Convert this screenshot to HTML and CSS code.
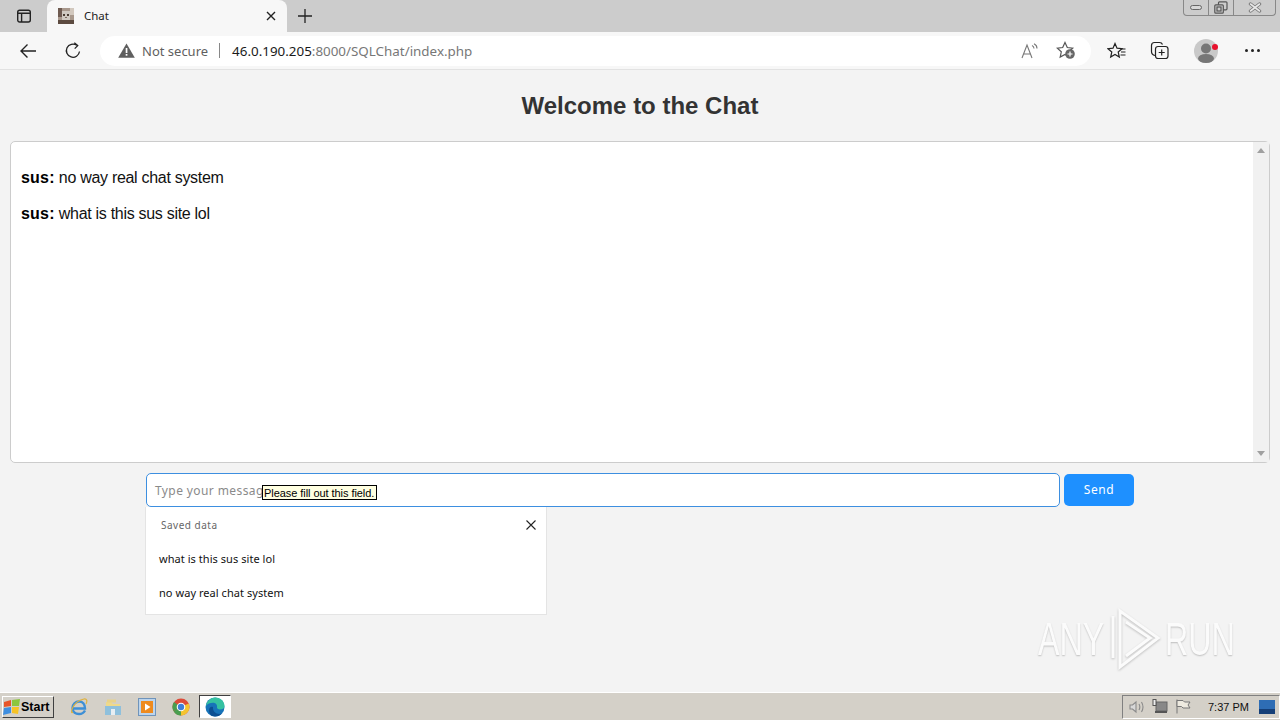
FILE: index.html
```html
<!DOCTYPE html>
<html lang="en">
<head>
    <meta charset="UTF-8">
    <title>Chat</title>
    <link rel="stylesheet" href="styles.css">
</head>
<body>
    <!-- Tab strip -->
    <div class="tabstrip">
        <div class="tab-actions">
            <svg class="icon" width="16" height="16" viewBox="0 0 16 16" fill="none" stroke="#222" stroke-width="1.4"><rect x="1.7" y="2.2" width="12.6" height="11.8" rx="2"/><path d="M2 5.2h12M5.6 5.2V14"/></svg>
        </div>
        <div class="tab">
            <svg class="favicon" width="16" height="16" viewBox="0 0 16 16"><rect width="16" height="16" fill="#a8988c"/><rect x="0" y="0" width="4" height="9" fill="#6e5a50"/><rect x="12" y="0" width="4" height="7" fill="#d2c8be"/><rect x="4" y="3" width="8" height="9" fill="#cfc8c0"/><rect x="5" y="6" width="2" height="2" fill="#4a3d33"/><rect x="9" y="6" width="2" height="2" fill="#4a3d33"/><rect x="7" y="9" width="2" height="1" fill="#7a685c"/><rect x="0" y="12" width="16" height="4" fill="#5c4a40"/></svg>
            <span class="tab-title">Chat</span>
            <svg class="tab-close" width="10" height="10" viewBox="0 0 10 10" stroke="#222" stroke-width="1.4"><path d="M1 1l8 8M9 1l-8 8"/></svg>
        </div>
        <svg class="new-tab" width="16" height="16" viewBox="0 0 16 16" stroke="#222" stroke-width="1.3"><path d="M8 1v14M1 8h14"/></svg>
        <div class="window-buttons">
            <div class="win-btn"><svg width="12" height="6" viewBox="0 0 12 6" fill="#d8d8d8" stroke="#666"><rect x="0.5" y="0.5" width="11" height="4" rx="2"/></svg></div>
            <div class="win-btn"><svg width="14" height="13" viewBox="0 0 14 13" fill="none" stroke="#555" stroke-width="1.2"><rect x="4.5" y="0.8" width="8.5" height="8" rx="1"/><rect x="0.8" y="3.8" width="8.5" height="8.4" rx="1" fill="#ccc"/><rect x="3" y="6" width="4" height="4"/></svg></div>
            <div class="win-btn win-close"><svg width="14" height="11" viewBox="0 0 14 11" stroke-linecap="round"><path d="M2.5 2l9 7M11.5 2l-9 7" stroke="#777" stroke-width="3.4"/><path d="M2.5 2l9 7M11.5 2l-9 7" stroke="#e8e8e8" stroke-width="1.6"/></svg></div>
        </div>
    </div>

    <!-- Address bar -->
    <div class="toolbar">
        <svg class="nav-back" width="18" height="16" viewBox="0 0 18 16" fill="none" stroke="#222" stroke-width="1.4"><path d="M17 8H2M8.5 1.5L2 8l6.5 6.5"/></svg>
        <svg class="nav-reload" width="18" height="18" viewBox="0 0 18 18" fill="none" stroke="#222" stroke-width="1.3"><path d="M15.5 9.5A6.6 6.6 0 1 1 12.8 3.3"/><path d="M10.3 0.8l3.4 2.8-3 3"/></svg>
        <div class="addressbar">
            <svg class="warn" width="17" height="15" viewBox="0 0 17 15"><path d="M8.5 0.5L16.8 14.800H0.2z" fill="#5f5f5f"/><rect x="7.7" y="5" width="1.7" height="5" fill="#fff"/><rect x="7.7" y="11" width="1.7" height="1.7" fill="#fff"/></svg>
            <span class="not-secure">Not secure</span>
            <span class="addr-sep"></span>
            <span class="url"><span class="url-host">46.0.190.205</span>:8000/SQLChat/index.php</span>
            <svg class="read-aloud" width="18" height="16" viewBox="0 0 18 16" fill="none" stroke="#777" stroke-width="1.1"><path d="M1 15L6 2l5 13M2.8 11h6.4"/><path d="M11 2.5c1.4.6 2 1.700 2 3M13 .8c1.900.9 3 2.600 3 4.700"/></svg>
            <svg class="fav-add" width="20" height="19" viewBox="0 0 20 19"><path d="M9 1.500l2.300 5 5.400.6-4 3.700 1.100 5.300L9 13.400l-4.800 2.700 1.100-5.300-4-3.700 5.400-.6z" fill="none" stroke="#555" stroke-width="1.2"/><circle cx="14" cy="13" r="4.8" fill="#666"/><path d="M14 10.500v5M11.500 13h5" stroke="#fff" stroke-width="1.2"/></svg>
        </div>
        <svg class="tool-icon" width="20" height="18" viewBox="0 0 20 18" fill="none" stroke="#222" stroke-width="1.2"><path d="M8 1.500l2 4.700 5 .5-3.800 3.300 1.100 5-4.300-2.600-4.300 2.600 1.100-5L1 6.700l5-.5z"/><path d="M13.500 7h5M14 10h4.500M13.500 13h5"/></svg>
        <svg class="tool-icon" width="20" height="19" viewBox="0 0 20 19" fill="none" stroke="#222" stroke-width="1.2"><path d="M5 14.500C2.800 14 1.500 12.500 1.500 10.500V4.500C1.500 2.800 2.800 1.500 4.500 1.500H9.500C11 1.500 12 2.200 12.500 3.500"/><rect x="5.5" y="5.5" width="12.5" height="12" rx="2.5"/><path d="M11.700 8.500v6M8.700 11.500h6"/></svg>
        <div class="avatar">
            <svg width="24" height="24" viewBox="0 0 24 24"><circle cx="12" cy="12" r="12" fill="#c9c9c9"/><circle cx="12" cy="9.5" r="5" fill="#777"/><ellipse cx="12" cy="19.5" rx="8" ry="4.5" fill="#777"/><circle cx="21" cy="8" r="3" fill="#e8112d"/></svg>
        </div>
        <div class="more-dots"><span></span><span></span><span></span></div>
    </div>

    <!-- Page -->
    <main class="page">
        <h1 class="page-title">Welcome to the Chat</h1>
        <div class="chat-box">
            <div class="messages">
                <p class="message"><strong>sus:</strong> no way real chat system</p>
                <p class="message"><strong>sus:</strong> what is this sus site lol</p>
            </div>
            <div class="scrollbar">
                <span class="arrow-up"></span>
                <span class="arrow-down"></span>
            </div>
        </div>
        <form class="chat-form">
            <div class="input-wrap">
                <div class="chat-input">Type your message</div>
                <div class="tooltip">Please fill out this field.</div>
                <div class="autofill">
                    <div class="autofill-head">
                        <span>Saved data</span>
                        <svg width="10" height="10" viewBox="0 0 10 10" stroke="#222" stroke-width="1.1"><path d="M0.5 0.5l9 9M9.5 0.5l-9 9"/></svg>
                    </div>
                    <div class="autofill-item">what is this sus site lol</div>
                    <div class="autofill-item">no way real chat system</div>
                </div>
            </div>
            <div class="send-btn">Send</div>
        </form>
        <div class="watermark">
            <span class="wm-text">ANY</span>
            <svg width="56" height="62" viewBox="0 0 56 62" fill="none" stroke="#fbfbfb" stroke-width="3" class="wm-logo"><path d="M7 8v42M14 3l38 27-38 29z"/><path d="M20 14l24 16-24 18"/></svg>
            <span class="wm-text">RUN</span>
        </div>
    </main>

    <!-- Taskbar -->
    <footer class="taskbar">
        <div class="start-btn">
            <svg width="18" height="16" viewBox="0 0 18 16"><path d="M1 3l7-2v6l-7 1z" fill="#e8562a"/><path d="M9 1l8-1-1 7-7 0z" fill="#8cc63f"/><path d="M1 9l7-1v6l-8 2z" fill="#3f8fe0"/><path d="M9 8h7l-1 7-6-1z" fill="#f7c325"/></svg>
            <span>Start</span>
        </div>
        <div class="quick-launch">
            <svg class="task-icon" width="18" height="18" viewBox="0 0 18 18" fill="none"><path d="M3 10.500h12C15 6 12.500 3.500 9 3.500S2.500 6.500 2.500 10c0 4 3 6 6.500 6 3 0 5-1.500 6-3.500" stroke="#3d8fd6" stroke-width="2.4"/><path d="M3 14C0 18 1 4 14 1c3-.5 3.500 2 2 5" stroke="#e0b23c" stroke-width="1.2"/></svg>
            <svg class="task-icon" width="18" height="18" viewBox="0 0 18 18"><path d="M2 4h5l2 2h7v3H2z" fill="#efd98a"/><rect x="1" y="8" width="16" height="9" fill="#8fc0dc"/><rect x="7" y="11" width="4" height="6" fill="#e8eef2"/><rect x="3" y="1.5" width="9" height="3" fill="#e8d28a"/></svg>
            <svg class="task-icon" width="18" height="18" viewBox="0 0 18 18"><rect x="0.5" y="0.5" width="17" height="17" fill="#bcd4ec" stroke="#6f94bb"/><rect x="3" y="3" width="12" height="12" fill="#ee8a1d"/><path d="M7 5.500l5.500 3.500L7 12.500z" fill="#fff"/></svg>
            <svg class="task-icon" width="18" height="18" viewBox="0 0 18 18"><circle cx="9" cy="9" r="8.5" fill="#dd4b39"/><path d="M9 9L1.500 13A8.500 8.500 0 0 0 9 17.500z" fill="#4a9e50"/><path d="M9 9l-7.500 4A8.500 8.500 0 0 1 2 4z" fill="#4a9e50"/><path d="M9 9l7.700-3.500A8.500 8.500 0 0 1 9 17.500z" fill="#f4c430"/><circle cx="9" cy="9" r="4.3" fill="#fff"/><circle cx="9" cy="9" r="3.2" fill="#3f7fd9"/></svg>
            <div class="task-active">
                <svg width="20" height="20" viewBox="0 0 20 20"><circle cx="10" cy="10" r="9.5" fill="#1773b8"/><path d="M1 9C2 3.500 6 .5 10.500.5c5 0 9 3.700 9 8.500 0 2.500-2 3.500-4.500 3.500-2 0-3-1-3-1.700C12.500 8 11 5.800 8 5.800 5 5.800 2.500 7 1 9z" fill="#35c1a1"/><path d="M8 10c-.5 4 2.500 7 6.500 7 1 0 2-.3 3-1-2 2.500-4.500 3.500-7.500 3.500-4 0-6-3-6-6S6 9 8 10z" fill="#0c4f92"/></svg>
            </div>
        </div>
        <div class="tray">
            <svg width="16" height="14" viewBox="0 0 16 14" fill="none" stroke="#8a8a8a" stroke-width="1.1"><path d="M1 5h2.500L7 2v10L3.500 9H1z" fill="#d8d8d8"/><path d="M10 4c1 1.800 1 4.200 0 6M12.500 2c1.800 3 1.800 7 0 10"/></svg>
            <svg width="16" height="15" viewBox="0 0 16 15"><rect x="4" y="3" width="11" height="9" fill="#888" stroke="#666"/><rect x="1" y="0.5" width="3" height="6" fill="#eee" stroke="#555"/><rect x="3" y="12" width="12" height="2" fill="#555"/></svg>
            <svg width="16" height="15" viewBox="0 0 16 15" fill="#eeeae0" stroke="#777"><path d="M2 0.500V14.500" fill="none"/><path d="M2 1.500h6l1.500 1.500H15l-2 3 2 3H8L6.500 7.500H2z"/></svg>
            <span class="clock">7:37 PM</span>
            <svg width="16" height="14" viewBox="0 0 16 14" class="show-desktop"><rect width="16" height="14" fill="#2e6db5"/><rect y="9" width="16" height="5" fill="#153f78"/></svg>
        </div>
    </footer>
</body>
</html>
```

FILE: styles.css
```css
* {
    box-sizing: border-box;
}
body {
    font-family: "Noto Sans", sans-serif;
    margin: 0;
    width: 1280px;
    height: 720px;
    overflow: hidden;
    display: flex;
    flex-direction: column;
    background-color: #f3f3f3;
}

/* tab strip */
.tabstrip {
    height: 32px;
    flex-shrink: 0;
    background-color: #cccccc;
    display: flex;
    align-items: flex-end;
}
.tab-actions {
    width: 47px;
    height: 32px;
    display: flex;
    align-items: center;
    padding-left: 16px;
}
.tab {
    width: 240px;
    height: 32px;
    background-color: #f7f7f7;
    border-radius: 8px 8px 0 0;
    display: flex;
    align-items: center;
    padding: 0 11px 0 11px;
}
.tab-title {
    font-size: 11.5px;
    color: #222;
    margin: 0 0 2px 10px;
    flex: 1;
}
.new-tab {
    margin: 0 0 8px 10px;
}
.window-buttons {
    margin-left: auto;
    margin-right: 4px;
    align-self: flex-start;
    display: flex;
    height: 16px;
    border: 1px solid #888;
    border-top: none;
    border-radius: 0 0 4px 4px;
}
.win-btn {
    width: 25px;
    display: flex;
    align-items: center;
    justify-content: center;
    border-right: 1px solid #888;
}
.win-close {
    width: 41px;
    border-right: none;
}

/* address bar */
.toolbar {
    height: 38px;
    flex-shrink: 0;
    background-color: #f7f7f7;
    border-bottom: 1px solid #e2e2e2;
    display: flex;
    align-items: center;
    padding-left: 19px;
}
.nav-back {
    margin-right: 27px;
}
.nav-reload {
    margin-right: 18px;
}
.addressbar {
    width: 991px;
    height: 30px;
    background-color: #fff;
    border-radius: 15px;
    display: flex;
    align-items: center;
    padding-left: 18px;
    margin-right: 16px;
}
.not-secure {
    font-size: 13px;
    color: #5f5f5f;
    margin-left: 7px;
}
.addr-sep {
    width: 1px;
    height: 15px;
    background-color: #888;
    margin: 0 12px 0 11px;
}
.url {
    font-size: 13.4px;
    color: #777;
    flex: 1;
}
.url-host {
    color: #1a1a1a;
}
.read-aloud {
    margin-right: 17px;
}
.fav-add {
    margin-right: 15px;
}
.tool-icon {
    margin-right: 23px;
}
.avatar {
    width: 24px;
    height: 24px;
    margin-left: 1px;
    margin-right: 27px;
}
.more-dots {
    display: flex;
    gap: 3px;
}
.more-dots span {
    width: 3px;
    height: 3px;
    border-radius: 50%;
    background-color: #222;
}

/* page */
.page {
    flex: 1;
    position: relative;
    padding: 0 10px;
    display: flex;
    flex-direction: column;
}
.page-title {
    font-family: "Liberation Sans", Arial, sans-serif;
    font-size: 24px;
    line-height: 28px;
    font-weight: bold;
    color: #333;
    text-align: center;
    margin: 22px 0 21px;
}
.chat-box {
    height: 322px;
    background-color: #fff;
    border: 1px solid #ccc;
    border-radius: 5px;
    display: flex;
}
.messages {
    flex: 1;
    padding: 17px 10px;
}
.message {
    font-family: "Liberation Sans", Arial, sans-serif;
    font-size: 16px;
    line-height: 18px;
    letter-spacing: -0.3px;
    color: #111;
    margin: 10px 0 18px;
}
.message strong {
    color: #000;
    letter-spacing: 0.2px;
}
.scrollbar {
    width: 16px;
    background-color: #f1f1f1;
    display: flex;
    flex-direction: column;
    justify-content: space-between;
    align-items: center;
    padding: 6px 0;
}
.arrow-up {
    border: 4px solid transparent;
    border-top: none;
    border-bottom: 5px solid #a0a0a0;
}
.arrow-down {
    border: 4px solid transparent;
    border-bottom: none;
    border-top: 5px solid #a0a0a0;
}
.chat-form {
    display: flex;
    align-items: center;
    gap: 4px;
    margin: 10px 0 0 136px;
}
.input-wrap {
    position: relative;
    width: 914px;
}
.chat-input {
    height: 34px;
    background-color: #fff;
    border: 1px solid #3d8fe0;
    border-radius: 5px;
    font-size: 12px;
    line-height: 34px;
    letter-spacing: 0.4px;
    color: #8a8a8a;
    padding-left: 8px;
}
.send-btn {
    width: 70px;
    height: 32px;
    background-color: #1e90ff;
    color: #fff;
    border-radius: 5px;
    font-size: 12px;
    line-height: 32px;
    letter-spacing: 0.6px;
    text-align: center;
}
.tooltip {
    position: absolute;
    left: 116px;
    top: 12px;
    height: 15px;
    padding: 0 2px 0 1px;
    background-color: #ffffe1;
    border: 1px solid #000;
    font-family: "Liberation Sans", Arial, sans-serif;
    font-size: 11px;
    line-height: 14px;
    letter-spacing: -0.06px;
    color: #000;
    white-space: nowrap;
}
.autofill {
    position: absolute;
    left: -1px;
    top: 34px;
    width: 402px;
    height: 108px;
    background-color: #fff;
    border: 1px solid #e4e4e4;
    border-top: none;
}
.autofill-head {
    height: 36px;
    display: flex;
    align-items: center;
    justify-content: space-between;
    padding: 0 10px 0 15px;
    font-size: 10px;
    letter-spacing: 0.5px;
    color: #666;
}
.autofill-item {
    height: 34px;
    font-size: 11px;
    line-height: 32px;
    letter-spacing: 0.05px;
    color: #111;
    padding-left: 13px;
}
.watermark {
    position: absolute;
    left: 1038px;
    top: 538px;
    display: flex;
    align-items: center;
}
.wm-text {
    font-family: "Liberation Sans", Arial, sans-serif;
    font-size: 46px;
    line-height: 62px;
    color: #fbfbfb;
    text-shadow: 0 1px 2px rgba(0, 0, 0, 0.22);
    display: block;
    width: 68px;
    transform: scaleX(0.7);
    transform-origin: left center;
    white-space: nowrap;
}
.wm-logo {
    filter: drop-shadow(0 1px 1px rgba(0, 0, 0, 0.22));
    margin-right: 3px;
}

/* taskbar */
.taskbar {
    height: 28px;
    flex-shrink: 0;
    background-color: #d4d0c8;
    border-top: 1px solid #fff;
    display: flex;
    align-items: center;
    padding-left: 2px;
}
.start-btn {
    width: 52px;
    height: 22px;
    background-color: #d4d0c8;
    border: 1px solid;
    border-color: #fff #404040 #404040 #fff;
    display: flex;
    align-items: center;
    font-family: "Liberation Sans", Arial, sans-serif;
    font-size: 12.5px;
    font-weight: bold;
    color: #000;
}
.quick-launch {
    display: flex;
    align-items: center;
    margin-left: 16px;
}
.task-icon {
    margin-right: 16px;
}
.task-active {
    width: 32px;
    height: 23px;
    margin-left: -7px;
    background-color: #fff;
    border: 1px solid;
    border-color: #404040 #fff #fff #404040;
    display: flex;
    align-items: center;
    justify-content: center;
}
.tray {
    margin-left: auto;
    width: 158px;
    height: 24px;
    border: 1px solid;
    border-color: #808080 #fff #fff #808080;
    display: flex;
    align-items: center;
    gap: 7px;
    padding-left: 6px;
}
.clock {
    font-family: "Liberation Sans", Arial, sans-serif;
    font-size: 11px;
    color: #111;
    margin-left: 10px;
}
.show-desktop {
    margin-left: 3px;
}
```
